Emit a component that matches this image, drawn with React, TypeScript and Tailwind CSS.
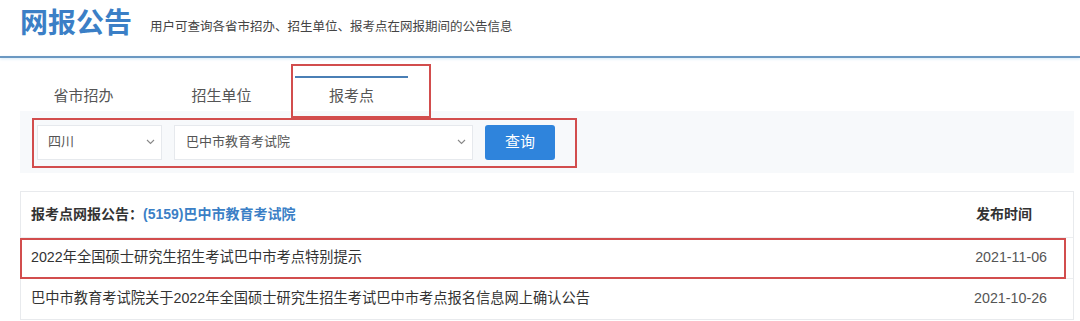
import React from 'react';

const tabs = [
  { label: '省市招办', cls: 'ml-[27px]' },
  { label: '招生单位', cls: 'ml-[25px]' },
  { label: '报考点', cls: 'ml-[17px]', active: true },
];

const rows = [
  { title: '2022年全国硕士研究生招生考试巴中市考点特别提示', date: '2021-11-06' },
  { title: '巴中市教育考试院关于2022年全国硕士研究生招生考试巴中市考点报名信息网上确认公告', date: '2021-10-26' },
];

const Chevron: React.FC = () => (
  <svg width="9" height="6" viewBox="0 0 9 6" fill="none" className="shrink-0">
    <path d="M1 1l3.5 3.5L8 1" stroke="#888" strokeWidth="1.1" />
  </svg>
);

const App: React.FC = () => {
  return (
    <div
      className="relative w-[1080px] h-[321px] overflow-hidden bg-white text-[#333]"
      style={{ fontFamily: '"Liberation Sans", "Noto Sans CJK SC", sans-serif' }}
    >
      {/* header */}
      <div className="flex items-center h-[56px] pl-[20px] pb-[8px]">
        <h1 className="text-[28px] font-bold text-[#3b7fc6] leading-none">网报公告</h1>
        <p className="ml-[18px] mt-[6px] text-[12.5px] text-[#444]">用户可查询各省市招办、招生单位、报考点在网报期间的公告信息</p>
      </div>
      <div className="h-[2px] bg-[#6b98c2] shadow-[0_1px_3px_#cfe6f5]" />

      {/* tabs */}
      <div className="flex h-[52px] mt-[1px]">
        {tabs.map((t) => (
          <div
            key={t.label}
            className={`${t.cls} w-[113px] flex items-center justify-center text-[15px] text-[#555] ${
              t.active ? 'border-t-2 border-[#4a7fb5] mt-[17px] pt-[3px]' : 'pt-[22px]'
            }`}
          >
            {t.label}
          </div>
        ))}
      </div>

      {/* filter */}
      <div className="ml-[20px] mr-[6px] h-[62px] bg-[#f7f9fb] flex items-center pl-[17px] gap-[12px]">
        <div className="w-[125px] h-[35px] bg-white border border-[#e6e9ed] flex items-center justify-between pl-[10px] pr-[6px] text-[13px] text-[#555]">
          <span>四川</span>
          <Chevron />
        </div>
        <div className="w-[299px] h-[35px] bg-white border border-[#e6e9ed] flex items-center justify-between pl-[11px] pr-[6px] text-[13px] text-[#555]">
          <span>巴中市教育考试院</span>
          <Chevron />
        </div>
        <button className="w-[70px] h-[35px] bg-[#2f84dc] rounded-[3px] text-white text-[15px]">查询</button>
      </div>

      {/* table */}
      <div className="mt-[18px] ml-[20px] mr-[6px] border border-[#e8eaed]">
        <div className="flex items-center justify-between h-[45px] pl-[10px] pr-[41px] text-[14px] font-bold">
          <div>
            <span className="text-[#333]">报考点网报公告：</span>
            <span className="text-[#3b7fc6]">(5159)巴中市教育考试院</span>
          </div>
          <span className="text-[#333]">发布时间</span>
        </div>
        {rows.map((r) => (
          <div
            key={r.date}
            className="flex items-center justify-between h-[41px] pl-[10px] pr-[26px] border-t border-[#eceef0] text-[14.25px] text-[#333]"
          >
            <span>{r.title}</span>
            <span className="text-[#555]">{r.date}</span>
          </div>
        ))}
      </div>

      {/* red annotation boxes */}
      <div className="absolute left-[291px] top-[64px] w-[140px] h-[54px] border-2 border-[#d24d4d] pointer-events-none" />
      <div className="absolute left-[32px] top-[118px] w-[545px] h-[50px] border-2 border-[#d24d4d] pointer-events-none" />
      <div className="absolute left-[20px] top-[238px] w-[1046px] h-[41px] border-2 border-[#d24d4d] pointer-events-none" />
    </div>
  );
};

export default App;
